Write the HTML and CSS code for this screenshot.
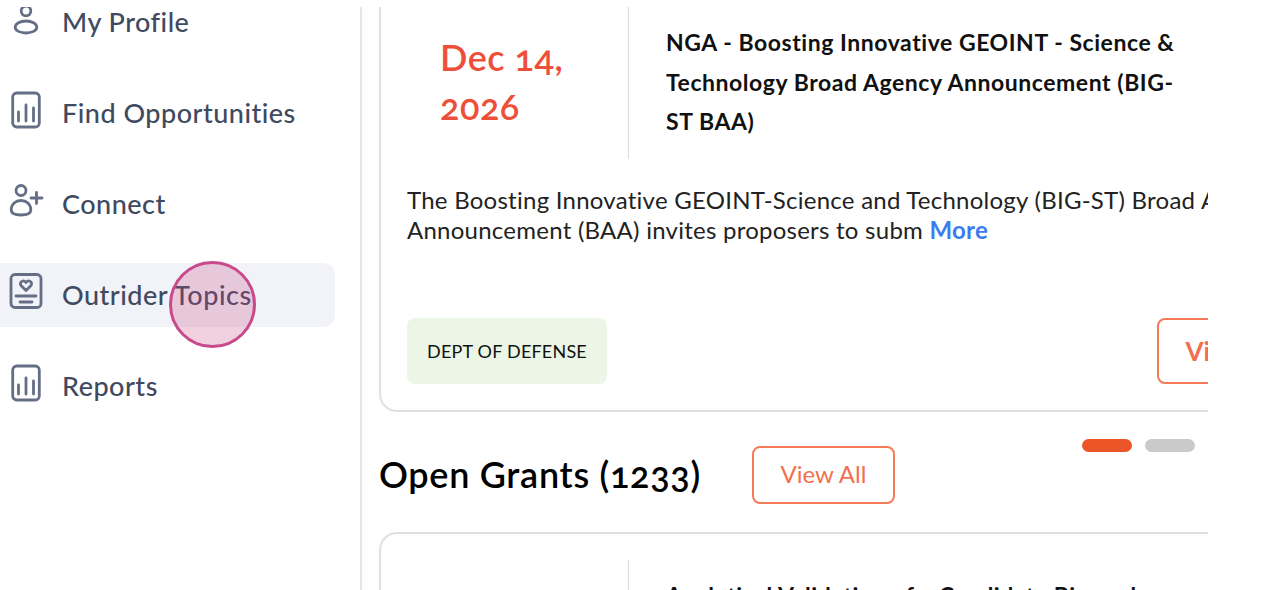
FILE: index.html
```html
<!DOCTYPE html>
<html lang="en">
<head>
  <meta charset="UTF-8">
  <title>Outrider Topics</title>
  <link rel="stylesheet" href="styles.css">
</head>
<body>
  <div class="layout">
    <aside class="sidebar">
      <nav class="menu">
        <a class="menu-item" href="#">
          <svg class="icon" viewBox="0 0 34 44"><circle cx="17" cy="11" r="4.800"/><path d="M6.200 27.500c0-4 5-6.500 10.800-6.500s10.800 2.500 10.800 6.500c0 3-5 5.500-10.800 5.500s-10.800-2.500-10.800-5.500z"/></svg>
          My Profile
        </a>
        <a class="menu-item" href="#">
          <svg class="icon" viewBox="0 0 34 44"><rect x="3.700" y="2" width="26.600" height="34" rx="4"/><path d="M9.500 21v9M17 14v16M24.500 17v13"/></svg>
          Find Opportunities
        </a>
        <a class="menu-item" href="#">
          <svg class="icon" viewBox="0 0 34 44"><circle cx="12" cy="8.500" r="5"/><path d="M2.200 28c0-6 4.500-9.500 9.800-9.500s9.800 3.500 9.800 9.500c0 3.500-4.500 5-9.800 5s-9.800-1.500-9.800-5zM27.500 10.500v11M22 16h11"/></svg>
          Connect
        </a>
        <a class="menu-item active" href="#">
          <svg class="icon" viewBox="0 0 34 44"><rect x="2" y="1.500" width="30" height="33" rx="4"/><path d="M17 17.500l-5-5c-2.500-3.500 3.200-6.500 5-3 1.800-3.500 7.500-.5 5 3zM7 23h20M11 29h12"/></svg>
          Outrider Topics
        </a>
        <a class="menu-item" href="#">
          <svg class="icon" viewBox="0 0 34 44"><rect x="3.700" y="2" width="26.600" height="34" rx="4"/><path d="M9.500 21v9M17 14v16M24.500 17v13"/></svg>
          Reports
        </a>
      </nav>
    </aside>

    <main class="content">
      <article class="card card-first">
        <div class="card-top">
          <div class="card-date">Dec 14, 2026</div>
          <h3 class="card-title">NGA - Boosting Innovative GEOINT - Science &amp; Technology Broad Agency Announcement (BIG-ST BAA)</h3>
        </div>
        <p class="card-desc">The Boosting Innovative GEOINT-Science and Technology (BIG-ST) Broad Agency<br>Announcement (BAA) invites proposers to subm <a class="more" href="#">More</a></p>
        <div class="card-foot">
          <span class="tag">DEPT OF DEFENSE</span>
          <a class="view-btn" href="#">View</a>
        </div>
      </article>

      <div class="dots">
        <span class="dot dot-on"></span>
        <span class="dot"></span>
      </div>

      <div class="section-head">
        <h2 class="section-title">Open Grants (1233)</h2>
        <a class="view-all" href="#">View All</a>
      </div>

      <article class="card">
        <div class="card-top">
          <div class="card-date"></div>
          <h3 class="card-title">Analytical Validation of a Candidate Biomarker for Neurological Conditions</h3>
        </div>
      </article>
    </main>
  </div>

  <div class="cursor"></div>
</body>
</html>
```

FILE: styles.css
```css
html, body {
  margin: 0;
  height: 100%;
  overflow: hidden;
  background: #fff;
}
body {
  font-family: 'Lato', sans-serif;
  font-variant-ligatures: none;
  font-variant-numeric: oldstyle-nums;
  color: #000;
}
.layout {
  display: flex;
  height: 590px;
  overflow: hidden;
}
.sidebar {
  width: 362px;
  height: 583px;
  flex-shrink: 0;
  margin-top: 7px;
  border-right: 2px solid #e6e6e6;
  box-sizing: border-box;
  overflow: hidden;
}
.menu {
  margin-top: -17px;
  display: flex;
  flex-direction: column;
  gap: 27px;
  padding-right: 25px;
}
.menu-item {
  display: flex;
  align-items: center;
  gap: 19px;
  height: 64px;
  box-sizing: border-box;
  padding: 0 0 2px 9px;
  color: #3f4a5f;
  font-size: 27px;
  font-weight: 500;
  letter-spacing: 0.5px;
  text-decoration: none;
  border-radius: 0 12px 12px 0;
}
.menu-item.active {
  background: #f2f3f8;
}
.icon {
  width: 34px;
  height: 44px;
  margin-top: 2px;
  fill: none;
  stroke: #646e84;
  stroke-width: 2.800;
  stroke-linecap: round;
  stroke-linejoin: round;
  flex-shrink: 0;
  overflow: visible;
}
.content {
  width: 829px;
  height: 583px;
  margin-left: 17px;
  margin-top: 7px;
  overflow: hidden;
}
.card {
  width: 880px;
  box-sizing: border-box;
  border: 2px solid #e0e0e0;
  border-radius: 18px;
  padding: 26px 0 26px 26px;
}
.card-first {
  margin-top: -28px;
}
.card-top {
  display: flex;
}
.card-date {
  width: 222px;
  height: 152px;
  flex-shrink: 0;
  box-sizing: border-box;
  padding: 26px 40px 0 33px;
  color: #ee4f3a;
  font-size: 36px;
  font-weight: 600;
  line-height: 49px;
  letter-spacing: 0.5px;
  border-right: 1px solid #d9d9d9;
}
.card-title {
  margin: 0;
  padding: 16px 0 0 37px;
  width: 530px;
  font-size: 23px;
  font-weight: 700;
  line-height: 39.500px;
  letter-spacing: 0.55px;
  color: #111;
}
.card-desc {
  margin: 26px 0 0;
  width: 800px;
  white-space: nowrap;
  font-size: 24px;
  line-height: 30px;
  letter-spacing: 0.25px;
  color: #222;
}
.more {
  color: #3b7cf0;
  font-weight: 700;
  text-decoration: none;
}
.card-foot {
  display: flex;
  align-items: center;
  margin-top: 73px;
}
.tag {
  display: flex;
  align-items: center;
  justify-content: center;
  flex-shrink: 0;
  width: 200px;
  height: 66px;
  background: #ecf6e6;
  border-radius: 8px;
  font-size: 18px;
  letter-spacing: 0.2px;
  color: #111;
}
.view-btn {
  display: flex;
  align-items: center;
  justify-content: center;
  flex-shrink: 0;
  width: 116px;
  height: 66px;
  margin-left: 550px;
  box-sizing: border-box;
  border: 2px solid #f47a5a;
  border-radius: 8px;
  color: #f2704e;
  font-size: 26px;
  font-weight: 700;
  text-decoration: none;
}
.dots {
  display: flex;
  gap: 13px;
  justify-content: flex-end;
  margin: 27px 13px 0 0;
}
.dot {
  width: 50px;
  height: 13px;
  border-radius: 7px;
  background: #cacaca;
}
.dot-on {
  background: #ec5528;
}
.section-head {
  display: flex;
  align-items: center;
  gap: 51px;
  margin: -6px 0 28px;
}
.section-title {
  margin: 0;
  padding-bottom: 2px;
  font-size: 36px;
  font-weight: 600;
  letter-spacing: 0.7px;
}
.view-all {
  display: flex;
  align-items: center;
  justify-content: center;
  width: 143px;
  height: 58px;
  box-sizing: border-box;
  padding-bottom: 4px;
  border: 2px solid #f47a5a;
  border-radius: 8px;
  color: #f2704e;
  font-size: 24px;
  text-decoration: none;
}
.cursor {
  position: absolute;
  left: 169px;
  top: 261px;
  width: 87px;
  height: 87px;
  box-sizing: border-box;
  border: 3px solid #c94a8c;
  border-radius: 50%;
  background: rgba(200, 70, 130, 0.25);
}
```
